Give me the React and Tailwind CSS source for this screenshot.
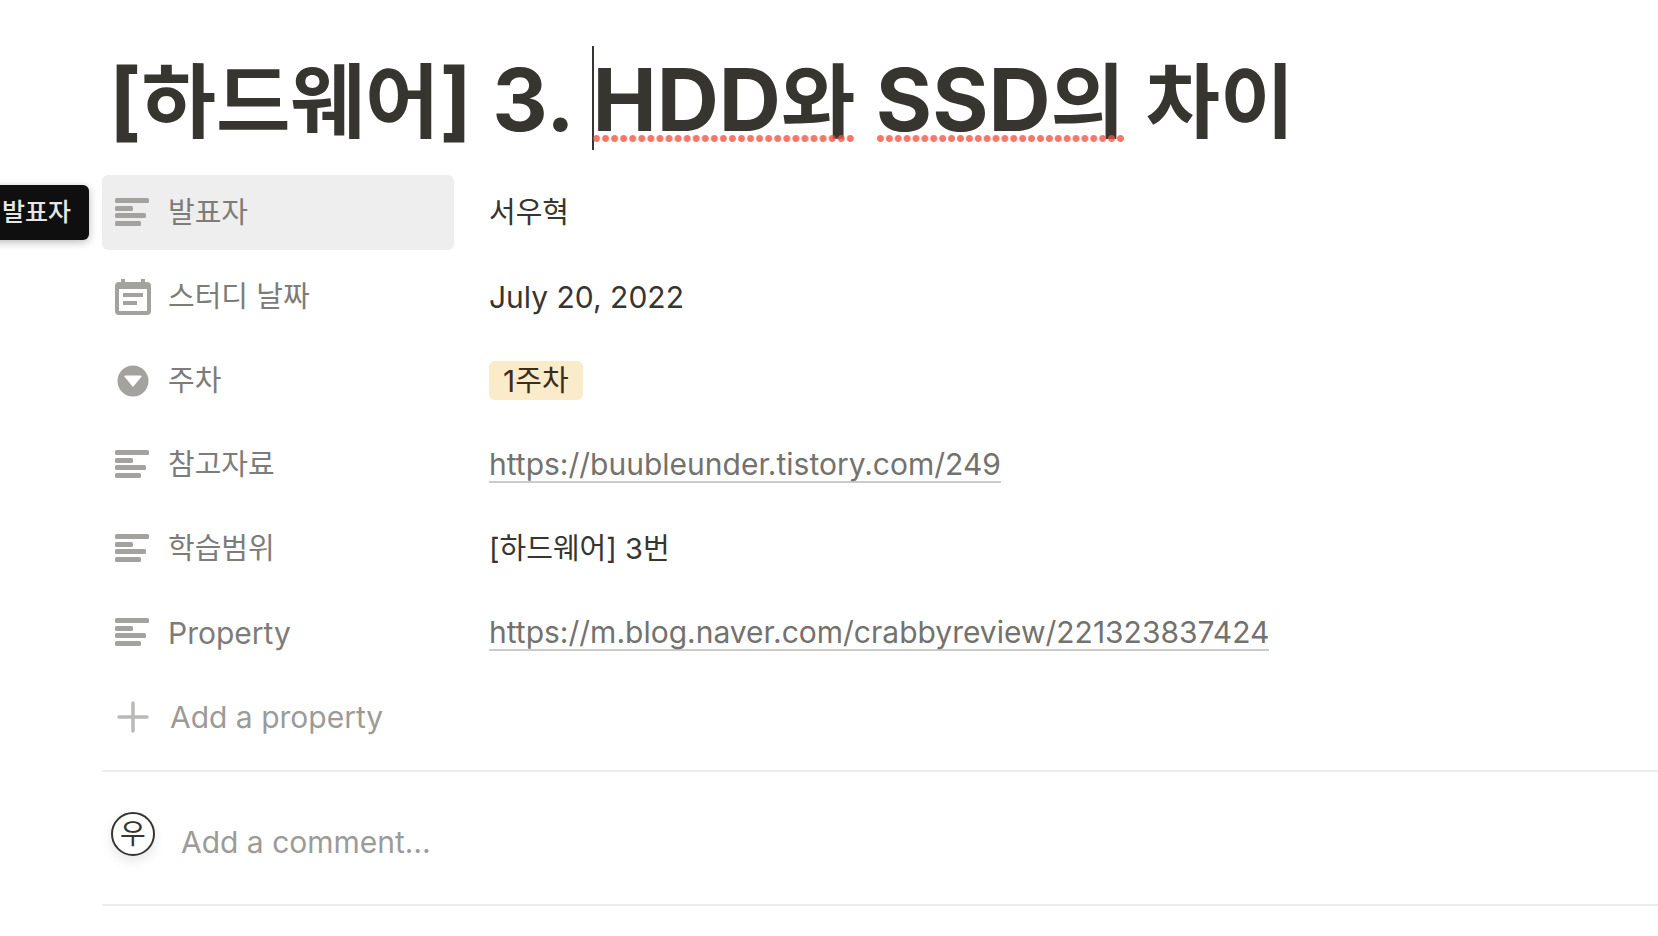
function TextIcon() {
  return (
    <svg viewBox="0 0 36 36" className="size-9 shrink-0 fill-current" aria-hidden="true">
      <rect x="0" y="3" width="34" height="5" rx="1.500" />
      <rect x="0" y="11" width="18" height="5" rx="1.500" />
      <rect x="0" y="18" width="31" height="5" rx="1.500" />
      <rect x="0" y="26" width="26" height="5" rx="1.500" />
    </svg>
  );
}

function DateIcon() {
  return (
    <svg viewBox="0 0 36 36" className="size-9 shrink-0 fill-current" aria-hidden="true">
      <path
        fillRule="evenodd"
        d="M6 0h4v3h16V0h4v3h2a4 4 0 0 1 4 4v25a4 4 0 0 1-4 4H4a4 4 0 0 1-4-4V7a4 4 0 0 1 4-4h2zM4 10v22h28V10z"
      />
      <path d="M8 14h20v4H8zM8 22h14v4H8z" />
    </svg>
  );
}

function SelectIcon() {
  return (
    <svg viewBox="0 0 36 36" className="size-9 shrink-0 fill-current" aria-hidden="true">
      <path
        fillRule="evenodd"
        d="M18 2.500a15.500 15.500 0 1 0 0 31 15.500 15.500 0 0 0 0-31zM10.400 12.500h15.200c.8 0 1.200.8.7 1.400l-7.500 9.200a1 1 0 0 1-1.600 0l-7.500-9.200c-.5-.6-.1-1.400.7-1.400z"
      />
    </svg>
  );
}

function PlusIcon() {
  return (
    <svg viewBox="0 0 36 36" className="size-9 shrink-0" aria-hidden="true">
      <path d="M18 4v28M4 18h28" stroke="currentColor" strokeWidth="3.500" strokeLinecap="round" />
    </svg>
  );
}

// word with the spell checker's dotted underline
function Misspelled({ children }) {
  return (
    <span className="relative">
      {children}
      <span className="absolute inset-x-0 bottom-[10px] h-[7px] bg-[radial-gradient(circle,rgba(243,80,64,0.78)_3px,transparent_4px)] bg-[length:9px_7px] [background-repeat:round]" />
    </span>
  );
}

function Ko({ children }) {
  return <span lang="ko" className="text-[81px]">{children}</span>;
}

function Link({ href }) {
  return (
    <a href={href} className="block border-b-2 border-[#cbcbc9] leading-[34px] text-[#73726e]">
      {href}
    </a>
  );
}

const properties = [
  { name: "발표자", icon: TextIcon, value: "서우혁", ko: true, hovered: true },
  { name: "스터디 날짜", icon: DateIcon, value: "July 20, 2022" },
  {
    name: "주차",
    icon: SelectIcon,
    value: (
      <span className="flex h-[39px] items-center rounded-md bg-[#faebcb] px-[14px] text-[#402c1b]">
        1<span className="text-[29px]">주차</span>
      </span>
    ),
  },
  { name: "참고자료", icon: TextIcon, value: <Link href="https://buubleunder.tistory.com/249" /> },
  { name: "학습범위", icon: TextIcon, value: "[하드웨어] 3번", ko: true },
  {
    name: "Property",
    icon: TextIcon,
    latin: true,
    value: <Link href="https://m.blog.naver.com/crabbyreview/221323837424" />,
  },
];

function PropertyRow({ name, icon: Icon, value, ko, latin, hovered }) {
  return (
    <div className="relative flex items-center gap-[35px]">
      {hovered && (
        <div
          role="tooltip"
          className="absolute right-full mr-[13px] flex h-[55px] items-center rounded-md bg-[#0f0f0f] px-[18px] text-[25px] font-medium whitespace-nowrap text-[#e6e6e5] shadow-[0_2px_8px_rgba(15,15,15,0.3)]"
        >
          {name}
        </div>
      )}
      <button
        type="button"
        className={`flex h-[75px] w-[352px] shrink-0 items-center gap-[17px] rounded-md px-[13px] text-[#7d7c78] ${hovered ? "bg-[#eeeeee]" : ""}`}
      >
        <span className="text-[#a3a29e]">
          <Icon />
        </span>
        <span className={latin ? "text-[30px]" : "text-[29px]"}>{name}</span>
      </button>
      <div className={ko ? "text-[29px]" : "text-[30px]"}>{value}</div>
    </div>
  );
}

export default function App() {
  return (
    <main className="min-h-screen overflow-hidden bg-white pt-12 pl-[102px] font-['Inter','Noto_Sans_CJK_KR',sans-serif] leading-none text-[#37352f]">
      <h1 className="h-[104px] pl-[7px] text-[86px] leading-[104px] font-bold whitespace-nowrap">
        [<Ko>하드웨어</Ko>] 3.{" "}
        <span className="relative">
          <span className="absolute -top-[2px] bottom-[2px] left-0 w-[2px] bg-[#37352f]" />
          <Misspelled>
            HDD<Ko>와</Ko>
          </Misspelled>
        </span>{" "}
        <Misspelled>
          SSD<Ko>의</Ko>
        </Misspelled>{" "}
        <Ko>차이</Ko>
      </h1>

      <section className="mt-[23px] flex flex-col gap-[9px]">
        {properties.map((property) => (
          <PropertyRow key={property.name} {...property} />
        ))}
        <button type="button" className="flex h-[75px] w-[352px] items-center gap-[19px] px-[13px] text-[30px] text-[#9c9b97]">
          <span className="text-[#b9b9b7]">
            <PlusIcon />
          </span>
          Add a property
        </button>
      </section>

      <div className="mt-4 flex h-[136px] items-center gap-[26px] border-y-2 border-[#ededec] pl-[9px]">
        <div className="mb-2 flex size-11 items-center justify-center rounded-full border-2 border-[#37352f] text-[28px] shadow-[0_5px_12px_rgba(15,15,15,0.1)]">
          우
        </div>
        <input
          type="text"
          aria-label="Add a comment"
          placeholder="Add a comment…"
          className="mt-2 flex-1 text-[30px] outline-none placeholder:text-[#9c9b97]"
        />
      </div>
    </main>
  );
}
